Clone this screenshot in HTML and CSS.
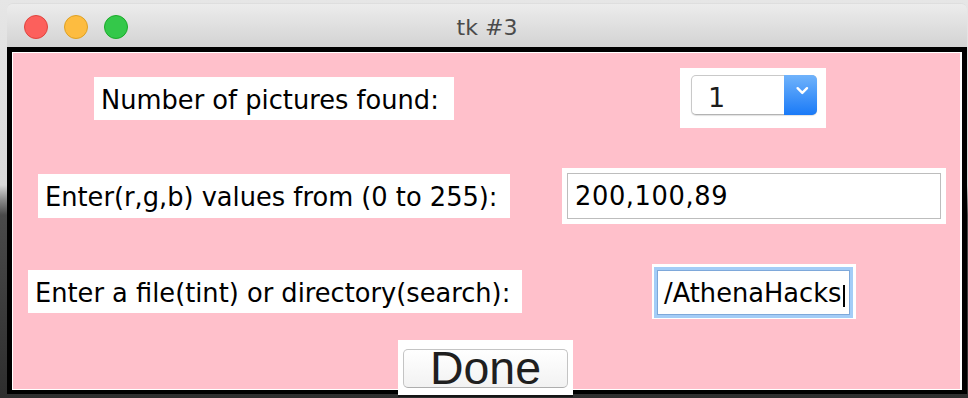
FILE: index.html
```html
<!DOCTYPE html>
<html lang="en">
<head>
    <meta charset="UTF-8">
    <meta name="viewport" content="width=device-width, initial-scale=1.0">
    <title>tk #3</title>
    <link rel="stylesheet" href="styles.css">
</head>
<body>
    <div class="window">
        <div class="titlebar">
            <div class="lights">
                <span class="light red"></span>
                <span class="light yellow"></span>
                <span class="light green"></span>
            </div>
            <div class="title">tk #3</div>
        </div>

        <div class="frame">
            <div class="canvas">
                <div class="row row-count">
                    <div class="label label-count">Number of pictures found:</div>
                    <div class="holder holder-select">
                        <div class="select">
                            <span class="select-value">1</span>
                            <span class="select-arrow">
                                <svg width="33" height="38" viewBox="0 0 33 38">
                                    <polyline points="13.6,12.2 18.3,16.9 23,12.2" fill="none" stroke="#fff" stroke-width="2.4" stroke-linecap="round" stroke-linejoin="round"/>
                                </svg>
                            </span>
                        </div>
                    </div>
                </div>

                <div class="row row-rgb">
                    <div class="label label-rgb">Enter(r,g,b) values from (0 to 255):</div>
                    <div class="holder holder-rgb">
                        <div class="entry entry-rgb">200,100,89</div>
                    </div>
                </div>

                <div class="row row-path">
                    <div class="label label-path">Enter a file(tint) or directory(search):</div>
                    <div class="holder holder-path">
                        <div class="entry entry-path">/AthenaHacks<span class="caret"></span></div>
                    </div>
                </div>

                <div class="row row-done">
                    <div class="holder holder-done">
                        <button class="done-button" type="button">Done</button>
                    </div>
                </div>
            </div>
        </div>
    </div>
</body>
</html>
```

FILE: styles.css
```css
body {
    margin: 0;
    width: 968px;
    height: 398px;
    overflow: hidden;
    font-family: 'DejaVu Sans', 'Liberation Sans', sans-serif;
    background: linear-gradient(#e6e6e6 0, #d8d8d8 185px, #8a8a8a 200px, #4a4a4a 215px, #2e2e2e 100%);
}
.window {
    width: 960px;
    margin: 3px 0 0 7px;
}
.titlebar {
    height: 44px;
    box-sizing: border-box;
    display: grid;
    grid-template-columns: 1fr auto 1fr;
    align-items: center;
    background: linear-gradient(#ececec, #d3d3d3);
    border-top: 1px solid #dedede;
    border-radius: 6px 6px 0 0;
}
.lights {
    display: flex;
    gap: 16px;
    padding-left: 17px;
    margin-top: 2px;
}
.light {
    width: 24px;
    height: 24px;
    box-sizing: border-box;
    border-radius: 50%;
    border: 1px solid;
}
.red {
    background: #fc605c;
    border-color: #e0443e;
}
.yellow {
    background: #fdbc40;
    border-color: #dea123;
}
.green {
    background: #34c84a;
    border-color: #1aab29;
}
.title {
    font-size: 22px;
    color: #4b4b4b;
    line-height: 39px;
    padding-top: 4px;
}
.frame {
    border: solid #000;
    border-width: 5px 5px 4px;
}
.canvas {
    height: 338px;
    box-sizing: border-box;
    padding-top: 15px;
    background: #ffc0cb;
    border: solid #fff;
    border-width: 1px 2px 1px 1px;
}
.row {
    display: flex;
    align-items: center;
}
.label {
    background: #fff;
    color: #000;
    font-size: 25.7px;
    white-space: nowrap;
    box-sizing: border-box;
    height: 43px;
    line-height: 40px;
    padding: 3px 0 0 7px;
}
.holder {
    background: #fff;
    box-sizing: border-box;
    flex: none;
}

/* row 1 */
.row-count {
    height: 60px;
}
.label-count {
    margin-left: 81px;
    width: 360px;
}
.holder-select {
    margin-left: 226px;
    width: 146px;
    height: 60px;
    padding: 7px 9px 13px 11px;
}
.select {
    display: flex;
    height: 40px;
    box-sizing: border-box;
    border: 1px solid #c9c9c9;
    border-bottom-color: #b3b3b3;
    border-radius: 5px;
    background: #fff;
    box-shadow: 0 1px 1px rgba(0, 0, 0, 0.12);
}
.select-value {
    flex: 1;
    font-size: 27px;
    color: #1c1c1c;
    line-height: 33px;
    padding: 5px 0 0 16px;
}
.select-arrow {
    width: 33px;
    margin: -1px -1px -1px 0;
    padding-top: 1px;
    border-radius: 0 5px 5px 0;
    background: linear-gradient(#70b3fb, #1a7af7);
}
.select-arrow svg {
    display: block;
}

/* row 2 */
.row-rgb {
    height: 56px;
    margin-top: 40px;
}
.label-rgb {
    margin-left: 25px;
    width: 472px;
    height: 44px;
    line-height: 41px;
}
.holder-rgb {
    margin-left: 52px;
    width: 384px;
    height: 56px;
    padding: 5px;
}
.entry {
    background: #fff;
    color: #000;
    font-size: 25.7px;
    white-space: nowrap;
    overflow: hidden;
    box-sizing: border-box;
}
.entry-rgb {
    height: 46px;
    border: 1px solid #bdbdbd;
    line-height: 44px;
    padding-left: 7px;
    letter-spacing: 0.6px;
}

/* row 3 */
.row-path {
    height: 55px;
    margin-top: 40px;
}
.label-path {
    margin-left: 15px;
    width: 494px;
}
.holder-path {
    margin-left: 130px;
    width: 204px;
    height: 55px;
    padding: 6px 6px 4px 5px;
}
.entry-path {
    height: 45px;
    border: 1px solid #7ea8da;
    box-shadow: 0 0 0 3px #a4cdf7;
    line-height: 42px;
    padding: 1px 0 0 6px;
}
.caret {
    display: inline-block;
    width: 2px;
    height: 22px;
    margin-left: 2px;
    background: #000;
    vertical-align: -5px;
}

/* row 4 */
.row-done {
    margin-top: 21px;
}
.holder-done {
    margin-left: 385px;
    width: 175px;
    height: 55px;
    padding: 9px 5px 0;
    box-shadow: 0 2px 0 #151515;
}
.done-button {
    display: block;
    width: 165px;
    height: 39px;
    margin: 0;
    padding: 0;
    border: 1px solid #c4c4c4;
    border-bottom-color: #aeaeae;
    border-radius: 5px;
    background: linear-gradient(#ffffff, #f2f2f2);
    font-family: 'Liberation Sans', Arial, sans-serif;
    font-size: 46.5px;
    line-height: 37px;
    color: #1f1f1f;
    text-align: center;
    overflow: visible;
}
```
